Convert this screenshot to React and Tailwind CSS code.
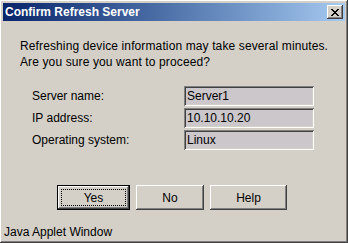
import React from 'react';

// Windows classic style "Confirm Refresh Server" dialog
const raised = 'shadow-[inset_-1px_-1px_#404040,inset_1px_1px_#ffffff,inset_-2px_-2px_#808080,inset_2px_2px_#d4d0c8]';
const sunken = 'shadow-[inset_1px_1px_#808080,inset_-1px_-1px_#ffffff,inset_2px_2px_#404040,inset_-2px_-2px_#d4d0c8]';

function Field({ label, value }) {
  return (
    <div className="flex items-center h-[20px]">
      <span className="w-[181px] pl-[29px]">{label}</span>
      <div className={`w-[130px] h-[20px] bg-[#cbc7cb] pl-[3px] flex items-center ${sunken}`}>{value}</div>
    </div>
  );
}

export default function App() {
  return (
    <div
      className={`w-[348px] h-[243px] bg-[#d4d0c8] p-[3px] flex flex-col text-[12px] text-black ${raised}`}
      style={{ fontFamily: '"Liberation Sans", Arial, sans-serif' }}
    >
      {/* title bar */}
      <div className="h-[18px] flex items-center justify-between bg-gradient-to-r from-[#0a246a] to-[#a6caf0] pl-[2px] pr-[2px]">
        <span className="text-white font-bold text-[12px] leading-none">Confirm Refresh Server</span>
        <div className={`w-[16px] h-[14px] bg-[#d4d0c8] flex items-center justify-center ${raised}`}>
          <svg width="8" height="7" viewBox="0 0 8 7">
            <path d="M0 0h2v1h1v1h2V1h1V0h2v1H7v1H6v1H5v1h1v1h1v1h1v1H6V6H5V5H3v1H2v1H0V6h1V5h1V4h1V3H2V2H1V1H0z" fill="#000" />
          </svg>
        </div>
      </div>

      {/* message */}
      <div className="pl-[17px] pt-[17px] leading-[16px] tracking-[0.12px]">
        <p>Refreshing device information may take several minutes.</p>
        <p>Are you sure you want to proceed?</p>
      </div>

      {/* info fields */}
      <div className="flex flex-col gap-[2px] mt-[16px]">
        <Field label="Server name:" value="Server1" />
        <Field label="IP address:" value="10.10.10.20" />
        <Field label="Operating system:" value="Linux" />
      </div>

      {/* buttons */}
      <div className="flex gap-[6px] pl-[54px] mt-[35px]">
        <div className="w-[73px] h-[25px] border border-black">
          <div className={`w-full h-full flex items-center justify-center p-[3px] ${raised}`}>
            <div className="w-full h-full border border-dotted border-black flex items-center justify-center">Yes</div>
          </div>
        </div>
        <button className={`w-[68px] h-[25px] bg-[#d4d0c8] ${raised}`}>No</button>
        <button className={`w-[77px] h-[25px] bg-[#d4d0c8] ${raised}`}>Help</button>
      </div>

      <div className="mt-auto pl-[1px] pb-[1px] leading-[14px]">Java Applet Window</div>
    </div>
  );
}
